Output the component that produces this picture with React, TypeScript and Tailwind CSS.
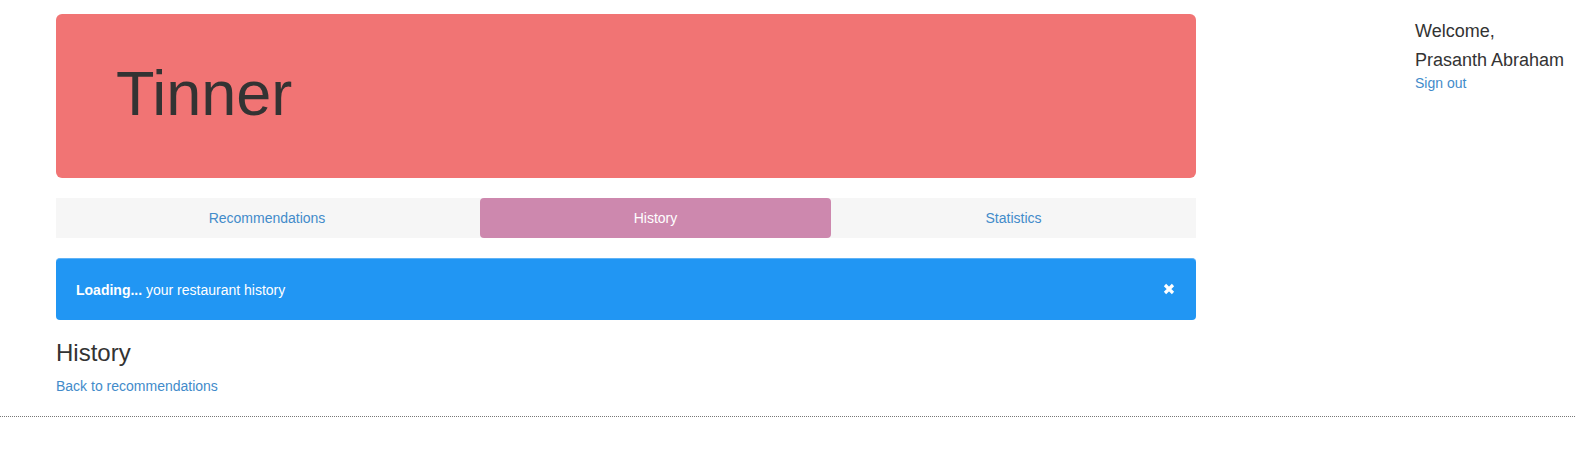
export default function App() {
  const font = { fontFamily: '"Liberation Sans", Arial, sans-serif' };

  return (
    <div className="min-h-[470px] bg-white text-[#333] text-[14px]" style={font}>
      <div className="flex">
        {/* main column */}
        <div className="ml-[56px] w-[1140px] pt-[14px] pb-[20px]">
          <div className="h-[164px] rounded-[6px] bg-[#f17474] px-[60px] pt-[45px]">
            <h1 className="text-[63px] leading-[69px] font-normal text-[#333]">Tinner</h1>
          </div>

          <nav className="mt-[20px] flex h-[40px] bg-[#f6f6f6]">
            <a className="flex w-[422px] items-center justify-center text-[#428bca] leading-5">
              Recommendations
            </a>
            <a className="ml-[2px] flex w-[351px] items-center justify-center rounded-[4px] bg-[#cd88ae] text-white leading-5">
              History
            </a>
            <a className="flex w-[365px] items-center justify-center text-[#428bca] leading-5">
              Statistics
            </a>
          </nav>

          <div className="mt-[20px] flex h-[62px] items-center justify-between rounded-[4px] border-t border-[#5fb2f6] bg-[#2196f3] pl-[20px] pr-[21px] text-white">
            <p className="leading-5">
              <strong className="font-bold">Loading...</strong> your restaurant history
            </p>
            <svg width="12" height="12" viewBox="0 0 12 12" className="mt-[-2px]">
              <path d="M2 2 L10 10 M10 2 L2 10" stroke="white" strokeWidth="3.2" strokeLinecap="butt" />
            </svg>
          </div>

          <h3 className="mt-[20px] text-[24px] leading-[1.1] font-normal">History</h3>
          <a className="mt-[10px] block leading-5 text-[#428bca]">Back to recommendations</a>
        </div>

        {/* user column */}
        <div className="ml-[219px] pt-[17px]">
          <div className="text-[18px] leading-[29px]">
            <div>Welcome,</div>
            <div className="whitespace-nowrap">Prasanth Abraham</div>
          </div>
          <a className="-mt-[2px] block leading-5 text-[#428bca]">Sign out</a>
        </div>
      </div>

      <hr className="border-0 border-t border-dotted border-[#777]" />
    </div>
  );
}
